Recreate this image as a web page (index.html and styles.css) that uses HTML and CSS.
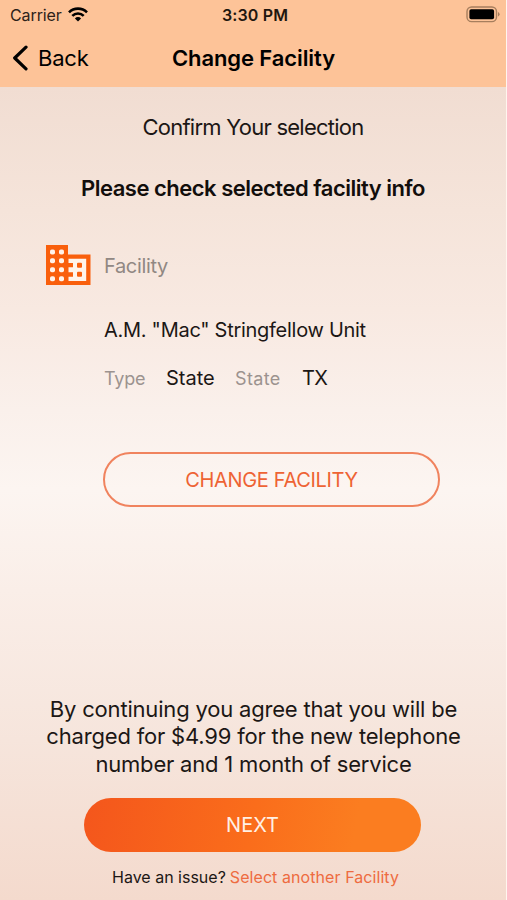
FILE: index.html
```html
<!DOCTYPE html>
<html lang="en">
<head>
<meta charset="utf-8">
<title>Change Facility</title>
<link rel="stylesheet" href="styles.css">
</head>
<body>
<div class="screen">
  <header class="header">
    <div class="status">
      <div class="status-left">
        <span class="carrier">Carrier</span>
        <svg class="wifi" width="20" height="15" viewBox="0 0 20 15" fill="none" stroke="#000" stroke-width="2.6">
          <path d="M1 5.3a12.8 12.8 0 0 1 18 0"/>
          <path d="M4.3 8.8a8.1 8.1 0 0 1 11.4 0"/>
          <path d="M10 14.5 6.9 11.4a4.4 4.4 0 0 1 6.2 0z" fill="#000" stroke="none"/>
        </svg>
      </div>
      <span class="time">3:30 PM</span>
      <svg class="battery" width="34" height="17" viewBox="0 0 34 17">
        <rect x="1" y="1" width="29.5" height="14.6" rx="4.6" fill="none" stroke="#a67e5d" stroke-width="1.4"/>
        <rect x="3.4" y="3.3" width="24.7" height="10" rx="1.8" fill="#000"/>
        <path d="M32 6v4.6q1.6-.8 1.6-2.3T32 6" fill="#a67e5d"/>
      </svg>
    </div>
    <nav class="nav">
      <a class="back">
        <svg width="16" height="26" viewBox="0 0 16 26" fill="none" stroke="#000" stroke-width="3.2" stroke-linecap="round" stroke-linejoin="round"><path d="M14 2.200 2.700 13 14 23.800"/></svg>
        <span class="back-label">Back</span>
      </a>
      <h1 class="title">Change Facility</h1>
    </nav>
  </header>
  <main class="content">
    <p class="confirm">Confirm Your selection</p>
    <h2 class="check">Please check selected facility info</h2>
    <section class="facility">
      <svg class="building" width="46" height="42" viewBox="0 0 46 42">
        <path d="M1 1h22v9.500h22.500V41H1z" fill="#f95f0c"/>
        <path d="M23.500 14.800h17.700V37H23.500v-4.300H28v-4.400h-4.500v-5H28V19h-4.500z" fill="#fff3ea"/>
        <g fill="#fff3ea">
          <rect x="5" y="5.500" width="5" height="5" rx="1.800"/><rect x="14" y="5.500" width="5" height="5" rx="1.800"/>
          <rect x="5" y="14.300" width="5" height="5" rx="1.800"/><rect x="14" y="14.300" width="5" height="5" rx="1.800"/>
          <rect x="5" y="23.300" width="5" height="5" rx="1.800"/><rect x="14" y="23.300" width="5" height="5" rx="1.800"/>
          <rect x="5" y="32.300" width="5" height="5" rx="1.800"/><rect x="14" y="32.300" width="5" height="5" rx="1.800"/>
        </g>
        <g fill="#f95f0c">
          <rect x="32" y="18.800" width="5" height="5" rx="1"/><rect x="32" y="27.800" width="5" height="5" rx="1"/>
        </g>
      </svg>
      <span class="facility-label">Facility</span>
    </section>
    <p class="name">A.M. "Mac" Stringfellow Unit</p>
    <div class="details">
      <span class="label type">Type</span>
      <span class="value state">State</span>
      <span class="label state-label">State</span>
      <span class="value code">TX</span>
    </div>
    <button class="change"><span class="change-text">CHANGE FACILITY</span></button>
    <p class="terms"><span class="line">By continuing you agree that you will be</span><span class="line">charged for $4.99 for the new telephone</span><span class="line">number and 1 month of service</span></p>
    <button class="next"><span class="next-text">NEXT</span></button>
    <p class="issue"><span class="question">Have an issue?</span><a class="link">Select another Facility</a></p>
  </main>
</div>
</body>
</html>
```
FILE: styles.css
```css
* { box-sizing: border-box; }
body { margin: 0; font-family: Inter, "Liberation Sans", sans-serif; color: #1c1715; }
h1, h2, p { margin: 0; font-weight: 400; white-space: nowrap; }
button { font: inherit; padding: 0; display: flex; align-items: center; justify-content: center; }
.screen { width: 507px; height: 900px; overflow: hidden; border-right: 1px solid #fff5ef; background: linear-gradient(#f1ddd2 87px, #f5e4da 210px, #f8e9e1 310px, #faf0eb 410px, #fcf5f1 490px, #faeee8 590px, #f6e5dc 740px, #f4dacd 900px); }
.header { height: 87px; background: #fdc398; color: #000; }
.status { height: 30px; display: grid; grid-template-columns: 1fr auto 1fr; align-items: center; padding: 0 6px 0 10px; }
.status-left { display: flex; align-items: center; gap: 7px; }
.carrier { width: 51px; font-size: 16px; letter-spacing: -.1px; color: #2e2118; }
.wifi { margin-top: -2px; }
.time { font-size: 16px; font-weight: 600; letter-spacing: .15px; color: #21160e; }
.battery { justify-self: end; margin-top: -1px; }
.nav { height: 56px; display: grid; grid-template-columns: 1fr auto 1fr; align-items: center; padding: 0 11px 0 12px; }
.back { display: flex; align-items: center; gap: 10px; font-size: 22px; }
.back-label { letter-spacing: -.2px; }
.title { font-size: 22px; font-weight: 600; letter-spacing: -.1px; }
.content { display: flex; flex-direction: column; }
.confirm { margin-top: 25px; height: 30px; line-height: 30px; text-align: center; font-size: 22px; letter-spacing: -.75px; }
.check { margin-top: 31px; height: 30px; line-height: 30px; text-align: center; font-size: 22px; font-weight: 600; letter-spacing: -.5px; color: #120e0c; }
.facility { margin: 41px 0 0 45px; height: 42px; display: flex; align-items: center; gap: 13px; font-size: 20px; color: #918883; }
.facility-label { letter-spacing: -.35px; margin-top: 2px; }
.name { margin: 29px 0 0 104px; height: 30px; line-height: 30px; font-size: 20px; letter-spacing: -.28px; }
.details { margin: 18px 0 0 104px; height: 30px; display: flex; align-items: center; }
.label { font-size: 18px; color: #9c938f; }
.value { font-size: 20px; }
.type { width: 62px; letter-spacing: -.2px; }
.state { width: 69px; }
.state-label { width: 67px; letter-spacing: .35px; }
.code { letter-spacing: -.6px; }
.change { width: 337px; height: 55px; margin: 59px 0 0 103px; border: 2px solid #f0835e; border-radius: 28px; background: transparent; color: #ee6334; font-size: 20px; }
.change-text { letter-spacing: -.35px; }
.terms { margin-top: 189px; text-align: center; font-size: 22px; line-height: 27.3px; }
.line { display: block; letter-spacing: -.19px; padding-left: 1px; }
.next { width: 337px; height: 54px; margin: 20px 0 0 84px; border: 0; border-radius: 27px; background: linear-gradient(100deg, #f4561c, #fa6d1b 50%, #fb7d20 80%); color: #fff0e5; font-size: 20px; }
.next-text { margin-top: 1px; }
.issue { margin: 15px 0 0 112px; height: 20px; line-height: 20px; display: flex; gap: 4px; font-size: 16px; }
.link { color: #ee6b40; letter-spacing: .07px; }
```
